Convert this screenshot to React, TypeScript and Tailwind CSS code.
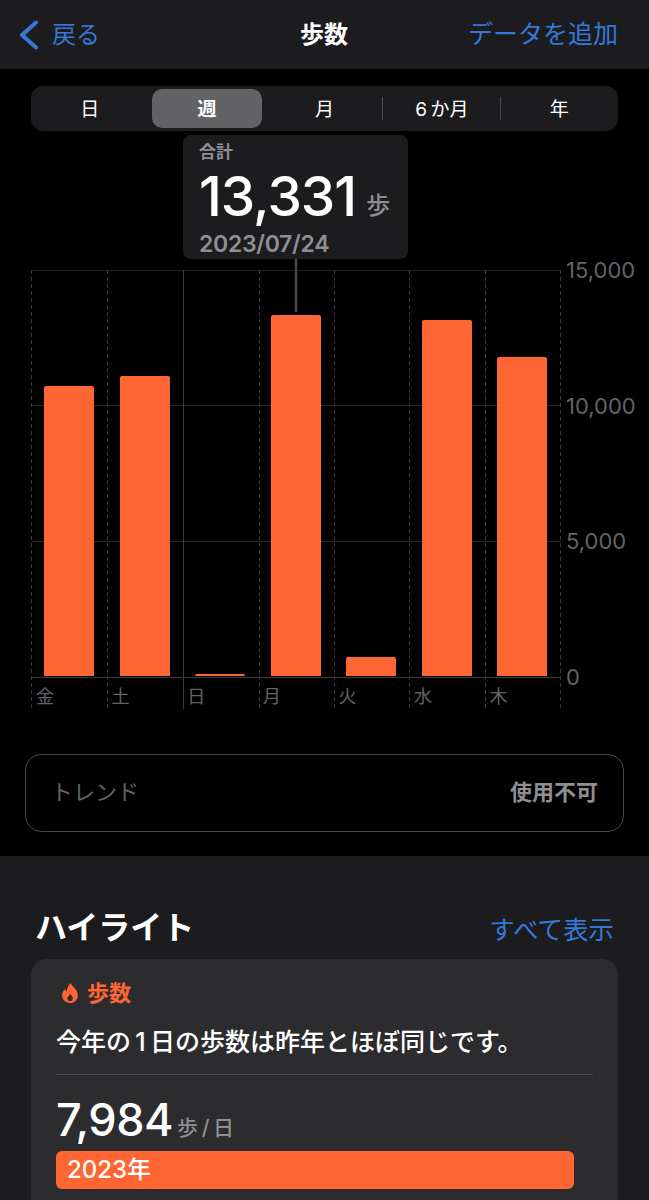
const JP = { fontFamily: "Inter, 'Noto Sans CJK JP', sans-serif" };

const tabs = ['日', '週', '月', '6\u2009か月', '年'];

const days = [
  { label: '金', top: 387 },
  { label: '土', top: 377 },
  { label: '日', top: 675 },
  { label: '月', top: 316 },
  { label: '火', top: 658 },
  { label: '水', top: 321 },
  { label: '木', top: 358 },
];

const gridY = [0.5, 135.5, 271.5, 407.5];
const gridX = [0.5, 76.5, 152.5, 228.5, 303.5, 378.5, 454.5, 529.5];

const Chevron = () => (
  <svg width="20" height="30" viewBox="0 0 20 30" fill="none">
    <path d="M17 2.5 3 15l14 12.5" stroke="#3478d8" strokeWidth="4" strokeLinecap="round" strokeLinejoin="round" />
  </svg>
);

const Flame = () => (
  <svg width="16" height="20" viewBox="0 0 16 20">
    <path
      fillRule="evenodd"
      fill="#ff6633"
      d="M8.6 0C9 3 15.8 5.8 15.8 12.4 15.8 16.8 12.4 20 8 20 3.6 20 0.2 16.8 0.2 12.6 0.2 9.6 1.6 7.4 3.2 6 3.4 7.2 4 8 4.8 8.4 5 5 6.4 2 8.6 0ZM8.2 10.4C7.8 12.2 5.2 13.2 5.2 15.6 5.2 17.2 6.4 18 8 18 9.6 18 10.9 17 10.9 15.4 10.9 13.2 8.8 12.2 8.2 10.4Z"
    />
  </svg>
);

const Chart = () => (
  <div className="relative mt-[11px] ml-[31px] flex h-[439px] w-[604px]">
    {/* grid */}
    <svg className="absolute left-0 top-0 overflow-visible" width="530" height="439">
      {gridY.map((y) => (
        <line key={y} x1="0" x2="530" y1={y} y2={y} stroke={y === 407.5 ? '#3a3a3c' : '#262628'} />
      ))}
      {gridX.map((x) => (
        <line
          key={x}
          x1={x}
          x2={x}
          y1="0"
          y2="439"
          stroke="#3a3a3c"
          strokeDasharray={x === 152.5 ? undefined : '4 3'}
        />
      ))}
      <line x1="265" x2="265" y1="-11" y2="42" stroke="#48484a" strokeWidth="2.5" />
    </svg>

    <div className="relative flex h-[439px] w-[530px] flex-col">
      <div className="flex h-[407px] items-end gap-[25.5px] pl-[13px]">
        {days.map((d) => (
          <div
            key={d.label}
            className="w-[50px] shrink-0 rounded-t-[2px] bg-[#ff6633]"
            style={{ height: 677 - d.top }}
          />
        ))}
      </div>
      <div className="flex pl-[5px] pt-[9px]">
        {days.map((d) => (
          <span key={d.label} className="w-[75.6px] shrink-0 text-[18px] leading-[24px] text-[#636366]">
            {d.label}
          </span>
        ))}
      </div>
    </div>

    {/* y axis */}
    <div className="ml-[5px] -mt-[11px] flex h-[429px] flex-col justify-between text-[22px] leading-[22px] text-[#636366]">
      <span>15,000</span>
      <span>10,000</span>
      <span>5,000</span>
      <span>0</span>
    </div>
  </div>
);

export default function App() {
  return (
    <div className="h-[1200px] w-[649px] overflow-hidden bg-black" style={JP}>
      {/* nav bar */}
      <header className="flex h-[69px] items-center justify-between bg-[#1c1c1e] pl-[19px] pr-[31px]">
        <div className="flex w-[211px] items-center gap-[13px] text-[24px] text-[#3478d8]">
          <Chevron />
          <span>戻る</span>
        </div>
        <h1 className="text-[24px] font-bold text-white">歩数</h1>
        <div className="flex w-[200px] justify-end text-[25px] text-[#3478d8]">データを追加</div>
      </header>

      <section className="h-[787px] pt-[17px]">
        {/* segmented control */}
        <div className="mx-[31px] grid h-[45px] grid-cols-5 items-center rounded-[12px] bg-[#1c1c1e]">
          {tabs.map((t, i) => (
            <div key={t} className="relative flex h-[39px] items-center justify-center">
              <div
                className={
                  i === 1
                    ? 'flex h-[39px] w-[110px] items-center justify-center rounded-[10px] bg-[#636366] pt-[3px] text-[19px] font-bold text-white'
                    : 'flex h-[39px] w-[110px] items-center justify-center pt-[3px] text-[19px] text-white'
                }
              >
                {t}
              </div>
              {(i === 2 || i === 3) && <div className="absolute right-0 top-[8px] h-[23px] w-px bg-[#48484a]" />}
            </div>
          ))}
        </div>

        {/* selected value tooltip */}
        <div className="relative z-10 ml-[183px] mt-[4px] h-[124px] w-[225px] rounded-[8px] bg-[#1c1c1e] pl-[16px] pt-[7px]">
          <div className="h-[20px] text-[17px] font-bold leading-[20px] text-[#8e8e93]">合計</div>
          <div className="mt-[6px] flex h-[56px] items-baseline leading-[56px]">
            <span className="text-[55px] font-medium tracking-[-1px] text-white">13,331</span>
            <span className="ml-[10px] -translate-y-[2px] text-[24px] font-medium text-[#8e8e93]">歩</span>
          </div>
          <div className="mt-[5px] text-[23px] font-semibold leading-[30px] tracking-[-0.3px] text-[#8e8e93]">2023/07/24</div>
        </div>

        <Chart />

        {/* trend */}
        <div className="mx-[25px] mt-[45px] flex h-[78px] items-center justify-between rounded-[16px] border border-[#48484a] px-[25px]">
          <span className="-mt-[2px] text-[22px] text-[#636366]">トレンド</span>
          <span className="-mt-[2px] text-[22px] font-bold text-[#8e8e93]">使用不可</span>
        </div>
      </section>

      <section className="h-[344px] bg-[#1c1c1e] px-[31px] pt-[50px]">
        <div className="flex items-end justify-between pr-[4px]">
          <h2 className="ml-[4px] text-[32px] font-bold leading-[44px] text-white">ハイライト</h2>
          <span className="text-[25.5px] leading-[40px] text-[#3478d8]">すべて表示</span>
        </div>

        <div className="mt-[9px] h-[300px] rounded-[16px] bg-[#2c2c2e] px-[25px] pt-[20px]">
          <div className="flex items-center gap-[9px] pl-[6px] text-[22px] font-bold leading-[28px] text-[#ff6633]">
            <Flame />
            <span>歩数</span>
          </div>
          <p className="mt-[18px] text-[25px] font-medium leading-[34px] text-white">今年の{'\u2009'}1{'\u2009'}日の歩数は昨年とほぼ同じです。</p>
          <div className="mt-[15px] h-px bg-[#48484a]" />
          <div className="mt-[17px] flex h-[56px] items-baseline leading-[56px]">
            <span className="text-[45px] font-medium tracking-[-0.5px] text-white">7,984</span>
            <span className="ml-[4px] -translate-y-[1px] text-[21px] font-medium text-[#8e8e93]">歩{'\u2009'}/{'\u2009'}日</span>
          </div>
          <div className="mt-[3px] flex h-[38px] w-[518px] items-center rounded-[6px] bg-[#ff6633] pl-[11px] text-[24px] font-medium text-white">
            2023年
          </div>
        </div>
      </section>
    </div>
  );
}
